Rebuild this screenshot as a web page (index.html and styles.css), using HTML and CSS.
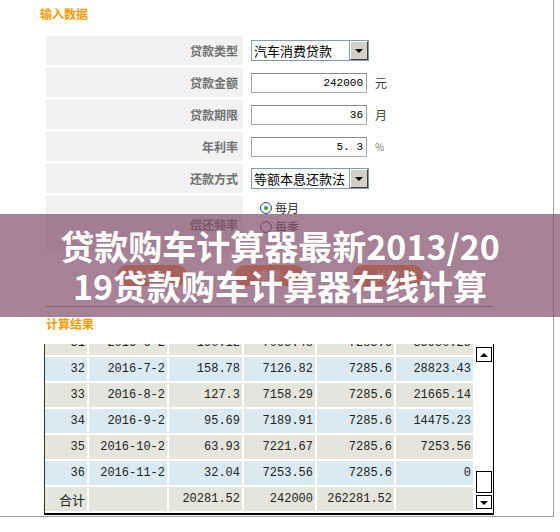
FILE: index.html
```html
<!DOCTYPE html>
<html lang="zh-CN">
<head>
    <meta charset="UTF-8">
    <meta name="viewport" content="width=device-width, initial-scale=1.0">
    <title>贷款购车计算器</title>
    <link rel="stylesheet" href="styles.css">
</head>
<body>
    <div class="page">
        <h3 class="section-title">输入数据</h3>

        <div class="calc-form">
            <div class="form-row">
                <label class="form-label">贷款类型</label>
                <div class="form-field">
                    <div class="select-box"><span class="select-text">汽车消费贷款</span><span class="select-btn"></span></div>
                </div>
            </div>
            <div class="form-row">
                <label class="form-label">贷款金额</label>
                <div class="form-field">
                    <input class="text-input" type="text" value="242000"><span class="unit">元</span>
                </div>
            </div>
            <div class="form-row">
                <label class="form-label">贷款期限</label>
                <div class="form-field">
                    <input class="text-input" type="text" value="36"><span class="unit">月</span>
                </div>
            </div>
            <div class="form-row">
                <label class="form-label">年利率</label>
                <div class="form-field">
                    <input class="text-input" type="text" value="5. 3"><span class="unit unit-small">%</span>
                </div>
            </div>
            <div class="form-row">
                <label class="form-label">还款方式</label>
                <div class="form-field">
                    <div class="select-box"><span class="select-text">等额本息还款法</span><span class="select-btn"></span></div>
                </div>
            </div>
            <div class="form-row form-row-tall">
                <label class="form-label">偿还频率</label>
                <div class="form-field radio-list">
                    <div class="radio-item"><span class="radio checked"></span>每月</div>
                    <div class="radio-item"><span class="radio"></span>每季</div>
                </div>
            </div>
        </div>

        <div class="btn-row">
            <button class="btn" type="button">计算</button>
            <button class="btn" type="button">重置</button>
            <button class="btn" type="button">关闭</button>
        </div>

        <h3 class="section-title result-title">计算结果</h3>

        <div class="result-box">
            <div class="result-scroll">
                <table class="result-table">
                    <colgroup>
                        <col style="width:42px"><col style="width:78px"><col style="width:73px">
                        <col style="width:71px"><col style="width:77px"><col style="width:77px">
                    </colgroup>
                    <tr class="row-a"><td>31</td><td>2016-6-2</td><td>190.12</td><td>7095.48</td><td>7285.6</td><td>35950.25</td></tr>
                    <tr class="row-b"><td>32</td><td>2016-7-2</td><td>158.78</td><td>7126.82</td><td>7285.6</td><td>28823.43</td></tr>
                    <tr class="row-a"><td>33</td><td>2016-8-2</td><td>127.3</td><td>7158.29</td><td>7285.6</td><td>21665.14</td></tr>
                    <tr class="row-b"><td>34</td><td>2016-9-2</td><td>95.69</td><td>7189.91</td><td>7285.6</td><td>14475.23</td></tr>
                    <tr class="row-a"><td>35</td><td>2016-10-2</td><td>63.93</td><td>7221.67</td><td>7285.6</td><td>7253.56</td></tr>
                    <tr class="row-b"><td>36</td><td>2016-11-2</td><td>32.04</td><td>7253.56</td><td>7285.6</td><td>0</td></tr>
                    <tr class="row-a"><td class="cjk">合计</td><td></td><td>20281.52</td><td>242000</td><td>262281.52</td><td></td></tr>
                </table>
            </div>
            <div class="scrollbar">
                <span class="sb-btn sb-up"></span>
                <span class="sb-track"></span>
                <span class="sb-thumb"></span>
                <span class="sb-btn sb-down"></span>
            </div>
        </div>
    </div>

    <div class="banner">贷款购车计算器最新2013/20<br>19贷款购车计算器在线计算</div>
</body>
</html>
```

FILE: styles.css
```css
body {
    margin: 0;
    background-color: #fff;
    font-family: "Noto Sans CJK SC", sans-serif;
    font-size: 12px;
    color: #333;
}
.page {
    width: 554px;
    height: 517px;
    box-sizing: border-box;
    padding: 7px 0 0 40px;
    border-right: 1px solid #a0a0a0;
    border-bottom: 1px solid #a0a0a0;
}
.section-title {
    margin: 0;
    font-size: 12px;
    line-height: 14px;
    font-weight: bold;
    color: #ff9900;
}

/* 输入表单 */
.calc-form {
    margin: 15px 0 0 6px;
    width: 447px;
    display: flex;
    flex-direction: column;
    gap: 3px;
}
.form-row {
    display: grid;
    grid-template-columns: 197px 1fr;
    height: 29px;
}
.form-row-tall {
    height: 56px;
}
.form-label {
    background-color: #f2f2f2;
    display: flex;
    align-items: center;
    justify-content: flex-end;
    padding-right: 5px;
    font-weight: bold;
    color: #707070;
}
.form-field {
    display: flex;
    align-items: center;
    padding-left: 8px;
}
.select-box {
    display: flex;
    width: 118px;
    height: 21px;
    box-sizing: border-box;
}
.select-text {
    flex: 1;
    border: 1px solid #7f9db9;
    border-right: none;
    font-size: 13px;
    line-height: 19px;
    padding-left: 2px;
    color: #000;
    white-space: nowrap;
    overflow: hidden;
}
.select-btn {
    width: 18px;
    height: 19px;
    box-sizing: border-box;
    background-color: #d4d0c8;
    border: 1px solid;
    border-color: #fff #404040 #404040 #fff;
    box-shadow: 0 0 0 1px #7f9db9;
    position: relative;
    margin: 1px 1px 1px 0;
}
.select-btn::after {
    content: "";
    position: absolute;
    left: 4px;
    top: 7px;
    border-left: 4px solid transparent;
    border-right: 4px solid transparent;
    border-top: 4px solid #000;
}
.text-input {
    width: 116px;
    height: 20px;
    box-sizing: border-box;
    border: 1px solid #a5a5a5;
    border-top-color: #8a8a8a;
    padding: 0 3px;
    text-align: right;
    font-family: "Liberation Mono", monospace;
    font-size: 11px;
    color: #000;
    outline: none;
}
.unit {
    margin-left: 8px;
    color: #444;
}
.unit-small {
    font-size: 10px;
    color: #777;
}
.radio-list {
    flex-direction: column;
    align-items: flex-start;
    justify-content: flex-start;
    padding: 2px 0 0 17px;
}
.radio-item {
    display: flex;
    align-items: center;
    height: 19px;
    color: #333;
}
.radio {
    width: 12px;
    height: 12px;
    box-sizing: border-box;
    border: 1px solid #1c5180;
    border-radius: 50%;
    background: radial-gradient(circle, #fff 40%, #dcdce0);
    margin-right: 3px;
    position: relative;
}
.radio.checked::after {
    content: "";
    position: absolute;
    left: 3px;
    top: 3px;
    width: 4px;
    height: 4px;
    border-radius: 50%;
    background-color: #2aa52a;
}

/* 按钮 */
.btn-row {
    margin: 13px 0 0 6px;
    width: 447px;
    display: flex;
    justify-content: center;
    gap: 48px;
    padding-bottom: 20px;
    border-bottom: 1px solid #999;
}
.btn {
    width: 70px;
    height: 21px;
    border: none;
    border-radius: 10px;
    background-color: #ff8f37;
    color: #fff;
    font-family: "Noto Sans CJK SC", sans-serif;
    font-size: 12px;
    padding: 0;
}

/* 计算结果 */
.result-title {
    margin: 10px 0 0 6px;
}
.result-box {
    margin: 13px 0 0 4px;
    width: 450px;
    height: 171px;
    box-sizing: border-box;
    display: flex;
    border-left: 1px solid #333;
    border-right: 1px solid #000;
    border-bottom: 2px solid #000;
}
.result-scroll {
    flex: 1;
    overflow: hidden;
    display: flex;
    flex-direction: column;
    justify-content: flex-end;
}
.result-table {
    table-layout: fixed;
    border-collapse: separate;
    border-spacing: 2px;
    margin: 0 -2px;
    font-family: "Liberation Mono", monospace;
    font-size: 12px;
    color: #222;
}
.result-table td {
    height: 24px;
    padding: 0 2px 0 0;
    text-align: right;
    white-space: nowrap;
}
.result-table .cjk {
    font-family: "Noto Sans CJK SC", sans-serif;
    font-size: 13px;
}
.row-a td {
    background-color: #e5e5dc;
}
.row-b td {
    background-color: #daeaf2;
}
.scrollbar {
    width: 20px;
    display: flex;
    flex-direction: column;
    padding: 3px 1px 4px 3px;
    box-sizing: border-box;
}
.sb-btn {
    height: 15px;
    box-sizing: border-box;
    border: 1px solid #000;
    background-color: #fff;
    position: relative;
}
.sb-btn::after {
    content: "";
    position: absolute;
    left: 3px;
    top: 5px;
    border-left: 4px solid transparent;
    border-right: 4px solid transparent;
}
.sb-up::after {
    border-bottom: 4px solid #000;
}
.sb-down::after {
    border-top: 4px solid #000;
}
.sb-track {
    flex: 1;
}
.sb-thumb {
    height: 22px;
    box-sizing: border-box;
    border: 1px solid #000;
    background-color: #fff;
}
.sb-down {
    margin-top: 2px;
    height: 14px;
}

/* 标题浮层 */
.banner {
    position: absolute;
    left: 0;
    top: 214px;
    width: 560px;
    height: 103px;
    display: flex;
    align-items: center;
    justify-content: center;
    text-align: center;
    background-color: rgba(129, 76, 105, 0.7);
    color: #fff;
    font-family: "Noto Sans CJK SC", sans-serif;
    font-size: 34px;
    font-weight: bold;
    line-height: 40px;
}
```
